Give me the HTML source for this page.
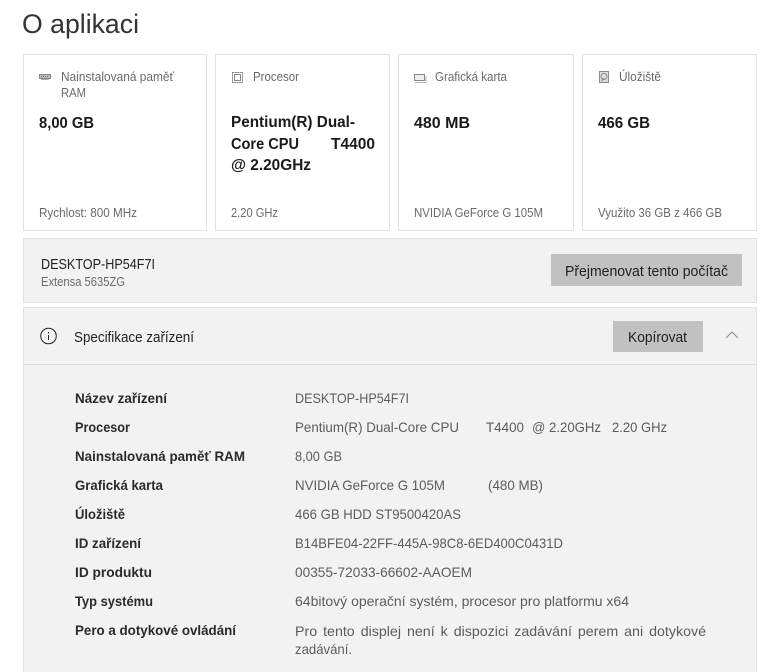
<!DOCTYPE html>
<html lang="cs">
<head>
<meta charset="utf-8">
<title>O aplikaci</title>
<style>
html,body{margin:0;padding:0;background:#fff;width:777px;height:672px;overflow:hidden}
svg{display:block}
text{font-family:"Liberation Sans",sans-serif;white-space:pre}
.t{font-size:27px;fill:#333}
.l{font-size:12.5px;fill:#6a6a6a}
.v{font-size:16px;font-weight:bold;fill:#1a1a1a}
.f{font-size:12.5px;fill:#6a6a6a}
.n{font-size:14.5px;fill:#222}
.s{font-size:12.5px;fill:#6a6a6a}
.b{font-size:14.5px;fill:#222}
.k{font-size:14px;font-weight:bold;fill:#2a2a2a}
.d{font-size:14px;fill:#5c5c5c}
</style>
</head>
<body>
<svg width="777" height="672" viewBox="0 0 777 672" xmlns="http://www.w3.org/2000/svg">
<rect width="777" height="672" fill="#fff"/>
<text class="t" x="22" y="33" textLength="117" lengthAdjust="spacingAndGlyphs">O aplikaci</text>

<g fill="#fff" stroke="#e1e1e1">
<rect x="23.5" y="54.5" width="183" height="176"/>
<rect x="215.5" y="54.5" width="174" height="176"/>
<rect x="398.5" y="54.5" width="175" height="176"/>
<rect x="582.5" y="54.5" width="174" height="176"/>
</g>

<!-- RAM icon -->
<g fill="none">
<rect x="39.500" y="74.500" width="11" height="4" fill="#bbb" stroke="#888"/>
<path d="M41 79.500h8" stroke="#aaa"/>
<path d="M41 76.500h8" stroke="#777" stroke-dasharray="1 1"/>
</g>
<!-- CPU icon -->
<g fill="none" stroke="#8a8a8a">
<rect x="232.500" y="72.500" width="10" height="10" stroke-dasharray="2 .4"/>
<rect x="234.500" y="74.500" width="6" height="6"/>
</g>
<!-- GPU icon -->
<g fill="none">
<rect x="414.500" y="74.500" width="10" height="6" fill="#eee" stroke="#888"/>
<path d="M415 82.500h11V76" stroke="#b5b5b5"/>
</g>
<!-- Disk icon -->
<g fill="none" stroke="#8a8a8a">
<rect x="599.500" y="71.500" width="9" height="11" fill="#ddd"/>
<circle cx="604" cy="76.500" r="3"/>
<path d="M601.500 81l2.500-3"/>
</g>

<text class="l" x="61" y="81" textLength="113" lengthAdjust="spacingAndGlyphs">Nainstalovaná paměť</text>
<text class="l" x="61" y="97" textLength="25" lengthAdjust="spacingAndGlyphs">RAM</text>
<text class="l" x="253" y="81" textLength="46" lengthAdjust="spacingAndGlyphs">Procesor</text>
<text class="l" x="435" y="81" textLength="72" lengthAdjust="spacingAndGlyphs">Grafická karta</text>
<text class="l" x="619" y="81" textLength="42" lengthAdjust="spacingAndGlyphs">Úložiště</text>

<text class="v" x="39" y="128" textLength="55" lengthAdjust="spacingAndGlyphs">8,00 GB</text>
<text class="v" x="231" y="127" textLength="124" lengthAdjust="spacingAndGlyphs">Pentium(R) Dual-</text>
<text class="v" x="231" y="149" textLength="68" lengthAdjust="spacingAndGlyphs">Core CPU</text>
<text class="v" x="331" y="149" textLength="44" lengthAdjust="spacingAndGlyphs">T4400</text>
<text class="v" x="231" y="170" textLength="80" lengthAdjust="spacingAndGlyphs">@ 2.20GHz</text>
<text class="v" x="414" y="128" textLength="56" lengthAdjust="spacingAndGlyphs">480 MB</text>
<text class="v" x="598" y="128" textLength="52" lengthAdjust="spacingAndGlyphs">466 GB</text>

<text class="f" x="39" y="217" textLength="98" lengthAdjust="spacingAndGlyphs">Rychlost: 800 MHz</text>
<text class="f" x="231" y="217" textLength="47" lengthAdjust="spacingAndGlyphs">2.20 GHz</text>
<text class="f" x="414" y="217" textLength="129" lengthAdjust="spacingAndGlyphs">NVIDIA GeForce G 105M</text>
<text class="f" x="598" y="217" textLength="124" lengthAdjust="spacingAndGlyphs">Využito 36 GB z 466 GB</text>

<!-- device name panel -->
<rect x="23.500" y="238.500" width="733" height="64" fill="#f2f2f2" stroke="#e1e1e1"/>
<text class="n" x="41" y="269" textLength="114" lengthAdjust="spacingAndGlyphs">DESKTOP-HP54F7I</text>
<text class="s" x="41" y="286" textLength="84" lengthAdjust="spacingAndGlyphs">Extensa 5635ZG</text>
<rect x="551" y="254" width="191" height="32" fill="#c1c1c1"/>
<text class="b" x="565" y="276" textLength="163" lengthAdjust="spacingAndGlyphs">Přejmenovat tento počítač</text>

<!-- spec panel -->
<rect x="23.500" y="307.500" width="733" height="380" fill="#f2f2f2" stroke="#e1e1e1"/>
<path d="M24 364.500h732" stroke="#dcdcdc"/>
<circle cx="48.500" cy="336" r="7.800" fill="none" stroke="#222" stroke-width="1"/>
<path d="M48.500 335v5" stroke="#222"/>
<path d="M48.500 332v1.500" stroke="#222"/>
<text class="n" x="74" y="342" textLength="120" lengthAdjust="spacingAndGlyphs">Specifikace zařízení</text>
<rect x="613" y="321" width="90" height="31" fill="#c1c1c1"/>
<text class="b" x="628" y="342" textLength="59" lengthAdjust="spacingAndGlyphs">Kopírovat</text>
<path d="M726 338l6-6 6 6" fill="none" stroke="#8a8a8a"/>

<text class="k" x="75" y="403" textLength="92" lengthAdjust="spacingAndGlyphs">Název zařízení</text>
<text class="k" x="75" y="432" textLength="55" lengthAdjust="spacingAndGlyphs">Procesor</text>
<text class="k" x="75" y="461" textLength="170" lengthAdjust="spacingAndGlyphs">Nainstalovaná paměť RAM</text>
<text class="k" x="75" y="490" textLength="88" lengthAdjust="spacingAndGlyphs">Grafická karta</text>
<text class="k" x="75" y="519" textLength="50" lengthAdjust="spacingAndGlyphs">Úložiště</text>
<text class="k" x="75" y="548" textLength="66" lengthAdjust="spacingAndGlyphs">ID zařízení</text>
<text class="k" x="75" y="577" textLength="77" lengthAdjust="spacingAndGlyphs">ID produktu</text>
<text class="k" x="75" y="606" textLength="78" lengthAdjust="spacingAndGlyphs">Typ systému</text>
<text class="k" x="75" y="635" textLength="161" lengthAdjust="spacingAndGlyphs">Pero a dotykové ovládání</text>

<text class="d" x="295" y="403" textLength="114" lengthAdjust="spacingAndGlyphs">DESKTOP-HP54F7I</text>
<text class="d" x="295" y="432" textLength="164" lengthAdjust="spacingAndGlyphs">Pentium(R) Dual-Core CPU</text>
<text class="d" x="486" y="432" textLength="38" lengthAdjust="spacingAndGlyphs">T4400</text>
<text class="d" x="532" y="432" textLength="69" lengthAdjust="spacingAndGlyphs">@ 2.20GHz</text>
<text class="d" x="612" y="432" textLength="55" lengthAdjust="spacingAndGlyphs">2.20 GHz</text>
<text class="d" x="295" y="461" textLength="47" lengthAdjust="spacingAndGlyphs">8,00 GB</text>
<text class="d" x="295" y="490" textLength="150" lengthAdjust="spacingAndGlyphs">NVIDIA GeForce G 105M</text>
<text class="d" x="488" y="490" textLength="55" lengthAdjust="spacingAndGlyphs">(480 MB)</text>
<text class="d" x="295" y="519" textLength="166" lengthAdjust="spacingAndGlyphs">466 GB HDD ST9500420AS</text>
<text class="d" x="295" y="548" textLength="268" lengthAdjust="spacingAndGlyphs">B14BFE04-22FF-445A-98C8-6ED400C0431D</text>
<text class="d" x="295" y="577" textLength="177" lengthAdjust="spacingAndGlyphs">00355-72033-66602-AAOEM</text>
<text class="d" x="295" y="606" textLength="334" lengthAdjust="spacingAndGlyphs">64bitový operační systém, procesor pro platformu x64</text>
<text class="d" x="295" y="636" word-spacing="2" textLength="411" lengthAdjust="spacingAndGlyphs">Pro tento displej není k dispozici zadávání perem ani dotykové</text>
<text class="d" x="295" y="654" textLength="57" lengthAdjust="spacingAndGlyphs">zadávání.</text>
</svg>
</body>
</html>
